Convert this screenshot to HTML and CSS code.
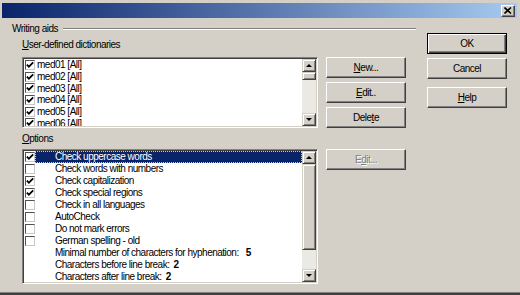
FILE: index.html
```html
<!DOCTYPE html>
<html lang="en">
  <head>
    <title>Writing aids</title>
    <link rel="stylesheet" href="styles.css">
  </head>
  <body>
    <div class="window">
      <div class="titlebar">
        <span class="close">
          <svg width="8" height="7" viewBox="0 0 8 7"><path d="M0.5 0.5 L7 6.5 M7 0.5 L0.5 6.5" stroke="#000" stroke-width="1.6" fill="none"/></svg>
        </span>
      </div>

      <div class="dialog">
        <div class="main">
          <div class="group-title"><span>Writing aids</span><span class="rule"></span></div>
          <div class="group">
            <div class="label"><u>U</u>ser-defined dictionaries</div>
            <div class="row">
              <div class="listbox dict">
                <div class="items">
                  <div class="item"><span class="check on"></span>med01 [All]</div>
                  <div class="item"><span class="check on"></span>med02 [All]</div>
                  <div class="item"><span class="check on"></span>med03 [All]</div>
                  <div class="item"><span class="check on"></span>med04 [All]</div>
                  <div class="item"><span class="check on"></span>med05 [All]</div>
                  <div class="item"><span class="check on"></span>med06 [All]</div>
                </div>
                <div class="scrollbar">
                  <span class="sb-btn up"></span>
                  <span class="thumb small"></span>
                  <span class="track"></span>
                  <span class="sb-btn down"></span>
                </div>
              </div>
              <div class="buttons">
                <button class="btn"><span><u>N</u>ew...</span></button>
                <button class="btn"><span><u>E</u>dit..</span></button>
                <button class="btn"><span>Dele<u>t</u>e</span></button>
              </div>
            </div>

            <div class="label options-label"><u>O</u>ptions</div>
            <div class="row options-row">
              <div class="listbox opts">
                <div class="items">
                  <div class="opt sel"><span class="check on"></span><span class="opt-text">Check uppercase words</span></div>
                  <div class="opt"><span class="check"></span><span class="opt-text">Check words with numbers</span></div>
                  <div class="opt"><span class="check on"></span><span class="opt-text">Check capitalization</span></div>
                  <div class="opt"><span class="check on"></span><span class="opt-text">Check special regions</span></div>
                  <div class="opt"><span class="check"></span><span class="opt-text">Check in all languages</span></div>
                  <div class="opt"><span class="check"></span><span class="opt-text">AutoCheck</span></div>
                  <div class="opt"><span class="check"></span><span class="opt-text">Do not mark errors</span></div>
                  <div class="opt"><span class="check"></span><span class="opt-text">German spelling - old</span></div>
                  <div class="opt"><span class="nocheck"></span><span class="opt-text">Minimal number of characters for hyphenation:<b class="val wide">5</b></span></div>
                  <div class="opt"><span class="nocheck"></span><span class="opt-text">Characters before line break:<b class="val">2</b></span></div>
                  <div class="opt"><span class="nocheck"></span><span class="opt-text">Characters after line break:<b class="val">2</b></span></div>
                </div>
                <div class="scrollbar">
                  <span class="sb-btn up"></span>
                  <span class="thumb big"></span>
                  <span class="track"></span>
                  <span class="sb-btn down"></span>
                </div>
              </div>
              <div class="buttons">
                <button class="btn disabled"><span>E<u>d</u>it...</span></button>
              </div>
            </div>
          </div>
        </div>

        <div class="side">
          <button class="btn default">OK</button>
          <button class="btn">Cancel</button>
          <button class="btn help"><span><u>H</u>elp</span></button>
        </div>
      </div>
      <div class="bottom-edge"></div>
    </div>
  </body>
</html>
```

FILE: styles.css
```css
body {
  margin: 0;
  background: #d4d0c8;
  font: 10px "Liberation Sans", Arial, sans-serif;
  letter-spacing: -0.5px;
  color: #000;
}
u {
  text-decoration: underline;
  text-underline-offset: 1px;
}

.window {
  width: 520px;
  height: 295px;
  overflow: hidden;
  display: flex;
  flex-direction: column;
}

/* title bar */
.titlebar {
  height: 15px;
  margin: 3px 3px 0 2px;
  padding-right: 2px;
  background: linear-gradient(to right, #0a246a, #a6caf0);
  display: flex;
  justify-content: flex-end;
  align-items: center;
}
.close {
  width: 14px;
  height: 12px;
  box-sizing: border-box;
  background: #d4d0c8;
  border: 1px solid;
  border-color: #fff #404040 #404040 #fff;
  box-shadow: inset -1px -1px #808080;
  display: flex;
  align-items: center;
  justify-content: center;
}

.dialog {
  flex: 1;
  display: flex;
  padding: 5px 0 0 12px;
}
.main {
  width: 404px;
}

/* group header with etched line */
.group-title {
  display: flex;
  align-items: center;
  height: 12px;
  line-height: 12px;
}
.rule {
  flex: 1;
  margin-left: 5px;
  border-top: 1px solid #808080;
  border-bottom: 1px solid #fff;
}
.group {
  padding-left: 10px;
}
.label {
  height: 12px;
  line-height: 12px;
  margin-top: 4px;
}
.options-label {
  margin-top: 5px;
}
.row {
  display: flex;
  gap: 8px;
  margin-top: 6px;
}
.options-row {
  margin-top: 4px;
}

/* list boxes */
.listbox {
  width: 296px;
  box-sizing: border-box;
  background: #fff;
  border: 1px solid;
  border-color: #808080 #fff #fff #808080;
  padding: 1px;
  box-shadow: inset 1px 1px #404040, inset -1px -1px #d4d0c8;
  display: flex;
}
.dict {
  height: 71px;
}
.opts {
  height: 135px;
}
.items {
  flex: 1;
  overflow: hidden;
}
.item {
  height: 11.7px;
  display: flex;
  align-items: center;
  white-space: nowrap;
}
.item .check {
  margin-right: 2px;
}
.opt {
  height: 12px;
  display: flex;
  align-items: stretch;
  white-space: nowrap;
}
.opt .check,
.opt .nocheck {
  align-self: center;
}
.opt-text {
  flex: 1;
  line-height: 12px;
  padding-left: 20px;
}
.opt.sel .opt-text {
  background: #0a246a;
  color: #fff;
  outline: 1px dotted #c8c8c8;
  outline-offset: -1px;
}
.val {
  margin-left: 4px;
}
.val.wide {
  margin-left: 7px;
}

/* checkboxes */
.check,
.nocheck {
  width: 10px;
  height: 10px;
  box-sizing: border-box;
  margin-left: 1px;
  flex: none;
}
.check {
  background: #fff;
  border: 1px solid;
  border-color: #505050 #c8c8c8 #c8c8c8 #505050;
  background-repeat: no-repeat;
  background-position: center;
}
.check.on {
  background-image: url("data:image/svg+xml,%3Csvg xmlns='http://www.w3.org/2000/svg' width='8' height='8' viewBox='0 0 8 8'%3E%3Cpath d='M0.8 3.6 L2.9 5.7 L7.2 1.3' stroke='%23000' stroke-width='1.7' fill='none'/%3E%3C/svg%3E");
}

/* scrollbars */
.scrollbar {
  width: 14px;
  display: flex;
  flex-direction: column;
  background: #ebe9e4;
}
.sb-btn,
.thumb {
  box-sizing: border-box;
  background: #d4d0c8;
  border: 1px solid;
  border-color: #d4d0c8 #404040 #404040 #d4d0c8;
  box-shadow: inset 1px 1px #fff, inset -1px -1px #808080;
}
.sb-btn {
  height: 13px;
  display: flex;
  align-items: center;
  justify-content: center;
}
.sb-btn::after {
  content: "";
  border-left: 3px solid transparent;
  border-right: 3px solid transparent;
}
.up::after {
  border-bottom: 3px solid #000;
}
.down::after {
  border-top: 3px solid #000;
}
.thumb.small {
  height: 8px;
}
.thumb.big {
  height: 86px;
}
.track {
  flex: 1;
}

/* push buttons */
.buttons {
  display: flex;
  flex-direction: column;
  gap: 4px;
}
.btn {
  width: 80px;
  height: 21px;
  box-sizing: border-box;
  padding: 0;
  font: inherit;
  letter-spacing: inherit;
  color: #000;
  background: #d4d0c8;
  border: 1px solid;
  border-color: #fff #404040 #404040 #fff;
  box-shadow: inset -1px -1px #808080;
  display: flex;
  align-items: center;
  justify-content: center;
}
.btn.default {
  border-color: #000;
  box-shadow: inset 1px 1px #fff, inset -1px -1px #404040, inset -2px -2px #808080;
}
.btn.disabled {
  color: #808080;
  text-shadow: 1px 1px #fff;
}

.side {
  display: flex;
  flex-direction: column;
  gap: 4px;
  margin-left: 11px;
  padding-top: 10px;
}
.help {
  margin-top: 4px;
}

.bottom-edge {
  height: 2px;
  border-top: 1px solid #808080;
  background: #404040;
}
```
